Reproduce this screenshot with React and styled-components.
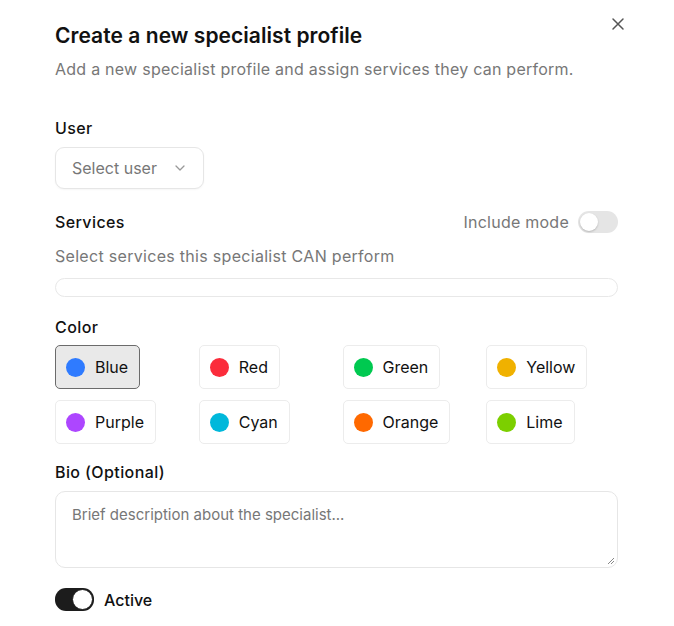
import React from "react";
import styled, { createGlobalStyle } from "styled-components";

const GlobalStyle = createGlobalStyle`
  body {
    margin: 0;
    background: #ffffff;
    font-family: Inter, "Noto Sans", "Liberation Sans", sans-serif;
    color: #111111;
  }
`;

const Dialog = styled.div`
  position: relative;
  display: flex;
  flex-direction: column;
  padding: 22px 56px 20px 55px;
`;

const CloseButton = styled.button`
  position: absolute;
  top: 15px;
  right: 47px;
  width: 18px;
  height: 18px;
  padding: 0;
  border: none;
  background: none;
  color: #555;
  display: flex;
  align-items: center;
  justify-content: center;
`;

const Title = styled.h2`
  margin: 0;
  font-size: 21px;
  line-height: 28px;
  font-weight: 600;
  letter-spacing: 0.05px;
`;

const Subtitle = styled.p`
  margin: 8px 0 0;
  font-size: 16px;
  line-height: 22px;
  letter-spacing: 0.25px;
  color: #777777;
`;

const Label = styled.div`
  margin-top: ${p => p.mt || 0}px;
  font-size: 16px;
  line-height: 24px;
  font-weight: 500;
  letter-spacing: 0.4px;
`;

const SelectTrigger = styled.button`
  align-self: flex-start;
  margin-top: 7px;
  height: 42px;
  display: flex;
  align-items: center;
  gap: 17px;
  padding: 0 17px 0 16px;
  border: 1px solid #e6e6e6;
  border-radius: 9px;
  background: #fff;
  font-family: inherit;
  font-size: 16px;
  color: #777777;
  box-shadow: 0 1px 2px rgba(0, 0, 0, 0.04);
`;

const ServicesRow = styled.div`
  margin-top: 22px;
  display: flex;
  align-items: center;
  justify-content: space-between;
  height: 22px;
`;

const ModeToggle = styled.div`
  display: flex;
  align-items: center;
  gap: 9px;
  font-size: 16px;
  letter-spacing: 0.25px;
  color: #777777;
`;

const Switch = styled.span`
  position: relative;
  display: inline-block;
  width: 40px;
  height: 22px;
  border-radius: 11px;
  box-sizing: border-box;
  background: ${p => (p.on ? "#1c1c1c" : "#e5e5e5")};

  &::after {
    content: "";
    position: absolute;
    top: 2px;
    left: ${p => (p.on ? "20px" : "2px")};
    width: 18px;
    height: 18px;
    border-radius: 50%;
    background: #fff;
    box-shadow: 0 1px 2px rgba(0, 0, 0, 0.2);
  }
`;

const Helper = styled.div`
  margin-top: 12px;
  font-size: 16px;
  line-height: 22px;
  letter-spacing: 0.3px;
  color: #777777;
`;

const ServiceBox = styled.div`
  margin-top: 11px;
  height: 19px;
  border: 1px solid #e8e8e8;
  border-radius: 10px;
  box-sizing: border-box;
`;

const ColorGrid = styled.div`
  margin-top: 6px;
  display: grid;
  grid-template-columns: repeat(4, 1fr);
  column-gap: 12px;
  row-gap: 11px;
`;

const ColorOption = styled.button`
  justify-self: start;
  height: 44px;
  display: flex;
  align-items: center;
  gap: 10px;
  padding: 0 11px 0 10px;
  border: 1px solid ${p => (p.selected ? "#6b6b6b" : "#ececec")};
  border-radius: 5px;
  background: ${p => (p.selected ? "#e9e9e9" : "#fff")};
  font-family: inherit;
  font-size: 16px;
  color: #111;
`;

const Dot = styled.span`
  width: 19px;
  height: 19px;
  border-radius: 50%;
  background: ${p => p.color};
`;

const BioArea = styled.div`
  position: relative;
  margin-top: 7px;
  height: 77px;
  box-sizing: border-box;
  padding: 11px 16px;
  border: 1px solid #e6e6e6;
  border-radius: 10px;
  font-size: 15px;
  line-height: 24px;
  color: #777777;
`;

const Grip = styled.svg`
  position: absolute;
  right: 2px;
  bottom: 2px;
`;

const ActiveRow = styled.div`
  margin-top: 20px;
  display: flex;
  align-items: center;
  gap: 10px;
  font-size: 16px;
  font-weight: 500;
`;

const ActiveSwitch = styled(Switch)`
  width: 39px;
  height: 23px;
  &::after {
    top: 1px;
    left: 17px;
    width: 19px;
    height: 19px;
    border: 1px solid #1c1c1c;
    box-shadow: none;
  }
`;

const colors = [
  { name: "Blue", value: "#2f7bff" },
  { name: "Red", value: "#fb2c3b" },
  { name: "Green", value: "#00c950" },
  { name: "Yellow", value: "#f0b100" },
  { name: "Purple", value: "#ad46ff" },
  { name: "Cyan", value: "#00b8db" },
  { name: "Orange", value: "#ff6900" },
  { name: "Lime", value: "#7ccf00" },
];

export default function App() {
  return (
    <>
      <GlobalStyle />
      <Dialog>
        <CloseButton aria-label="Close">
          <svg width="14" height="14" viewBox="0 0 14 14" fill="none" stroke="#555" strokeWidth="1.5" strokeLinecap="round">
            <path d="M2 2l10 10M12 2L2 12" />
          </svg>
        </CloseButton>
        <Title>Create a new specialist profile</Title>
        <Subtitle>Add a new specialist profile and assign services they can perform.</Subtitle>

        <Label mt={36}>User</Label>
        <SelectTrigger>
          Select user
          <svg width="12" height="8" viewBox="0 0 12 8" fill="none" stroke="#999" strokeWidth="1.3" strokeLinecap="round" strokeLinejoin="round">
            <path d="M2 2l4 4 4-4" />
          </svg>
        </SelectTrigger>

        <ServicesRow>
          <Label>Services</Label>
          <ModeToggle>
            Include mode
            <Switch />
          </ModeToggle>
        </ServicesRow>
        <Helper>Select services this specialist CAN perform</Helper>
        <ServiceBox />

        <Label mt={18}>Color</Label>
        <ColorGrid>
          {colors.map(c => (
            <ColorOption key={c.name} selected={c.name === "Blue"}>
              <Dot color={c.value} />
              {c.name}
            </ColorOption>
          ))}
        </ColorGrid>

        <Label mt={16}>Bio (Optional)</Label>
        <BioArea>
          Brief description about the specialist...
          <Grip width="10" height="10" viewBox="0 0 10 10" stroke="#888" strokeWidth="1">
            <path d="M9 3L3 9M9 6L6 9" />
          </Grip>
        </BioArea>

        <ActiveRow>
          <ActiveSwitch on />
          Active
        </ActiveRow>
      </Dialog>
    </>
  );
}
